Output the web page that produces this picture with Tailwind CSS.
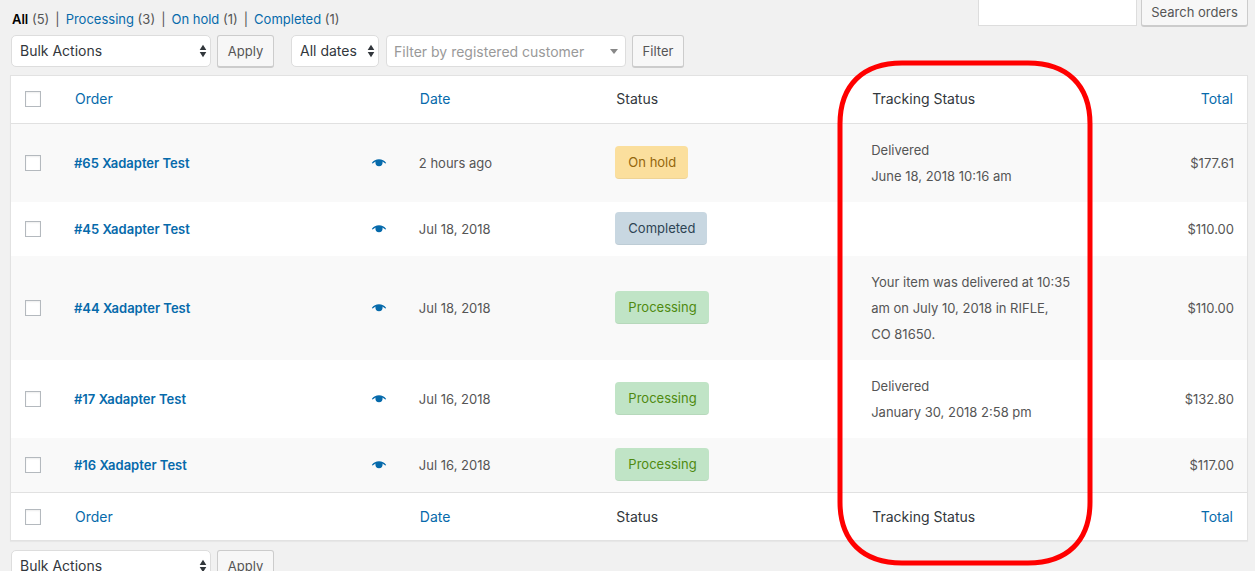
<!DOCTYPE html>
<html lang="en">
<head>
<meta charset="utf-8">
<title>Orders</title>
<script src="https://cdn.jsdelivr.net/npm/@tailwindcss/browser@4"></script>
</head>
<body class="h-screen overflow-hidden bg-[#f1f1f1] pl-2.5 pr-[7px] font-['Inter','Liberation_Sans',sans-serif] text-[13px] leading-5 text-[#555]">
<svg class="hidden">
  <symbol id="eye" viewBox="0 0 16 10"><path d="M.8 4.9C2.600 2.500 5 1.300 8 1.300s5.400 1.200 7.200 3.600l-.9.700c-.9-1-1.800-1.700-2.900-2.200.1.400.200.800.200 1.200a3.600 3.600 0 0 1-7.200 0c0-.4.100-.8.200-1.200-1.100.5-2 1.200-2.900 2.200z" fill="currentColor"/></symbol>
  <symbol id="updown" viewBox="0 0 8 14"><path d="M4 .8 7.300 5.900H.7zM4 13.200 7.300 8.100H.7z" fill="#32373c"/></symbol>
</svg>

<header class="flex h-[35px] items-start justify-between">
  <nav class="flex gap-1.5 pl-0.5 pt-[9px]" aria-label="Order status">
    <span><a href="#" class="font-semibold text-black">All</a> (5)</span><span>|</span>
    <span><a href="#" class="text-[#066aab]">Processing</a> (3)</span><span>|</span>
    <span><a href="#" class="text-[#066aab]">On hold</a> (1)</span><span>|</span>
    <span><a href="#" class="text-[#066aab]">Completed</a> (1)</span>
  </nav>
  <form class="flex gap-1">
    <input type="text" aria-label="Search orders" class="h-[26px] w-[159px] border border-t-0 border-[#ddd] bg-white px-1.5">
    <button type="button" class="h-[27px] w-[107px] whitespace-nowrap rounded-b-[3px] border border-b-2 border-t-0 border-[#ccc] bg-[#f7f7f7] pb-0.5">Search orders</button>
  </form>
</header>

<div class="flex h-[33px] items-start">
  <div class="relative ml-px w-[200px]">
    <select aria-label="Bulk action" class="h-8 w-full appearance-none rounded-[5px] border border-[#ddd] bg-white pl-2 pr-5 text-sm text-[#32373c]"><option>Bulk Actions</option></select>
    <svg class="pointer-events-none absolute right-1 top-[9px] h-3.5 w-2"><use href="#updown"/></svg>
  </div>
  <button type="button" class="ml-1.5 h-[33px] w-[57px] rounded-[3px] border border-b-2 border-[#ccc] bg-[#f7f7f7] pb-px">Apply</button>
  <div class="relative ml-[17px] w-[88px]">
    <select aria-label="Dates" class="h-8 w-full appearance-none rounded-[5px] border border-[#ddd] bg-white pl-2 pr-4 text-sm text-[#32373c]"><option>All dates</option></select>
    <svg class="pointer-events-none absolute right-1 top-[9px] h-3.5 w-2"><use href="#updown"/></svg>
  </div>
  <div class="relative ml-[7px] w-60">
    <select aria-label="Customer" class="h-8 w-full appearance-none rounded-[4px] border border-[#ddd] bg-white pl-[7px] pr-5 pt-0.5 text-sm text-[#999]"><option>Filter by registered customer</option></select>
    <svg class="pointer-events-none absolute right-2 top-3.5 h-[5px] w-2" viewBox="0 0 8 5"><path d="M0 0h8L4 5z" fill="#888"/></svg>
  </div>
  <button type="button" class="ml-1.5 h-[33px] w-[52px] rounded-[3px] border border-b-2 border-[#ccc] bg-[#f7f7f7] pb-px">Filter</button>
</div>

<main class="relative mt-[7px]">
  <div class="border border-[#e2e2e2] bg-white shadow-[0_1px_1px_rgba(0,0,0,0.04)]">
  <table class="w-full table-fixed border-collapse text-left">
    <colgroup><col class="w-[53px]"><col class="w-[27.9%]"><col class="w-[15.9%]"><col class="w-[20.7%]"><col class="w-[17.7%]"><col></colgroup>
    <thead class="text-sm text-[#32373c]">
      <tr class="h-[47px] border-b border-[#e1e1e1]">
        <td class="pl-3.5"><input type="checkbox" aria-label="Select all" class="block size-4 appearance-none border border-[#b4b9be] bg-white shadow-[inset_0_1px_2px_rgba(0,0,0,0.07)]"></td>
        <th class="px-[11px] font-normal"><a href="#" class="text-[#066aab]">Order</a></th>
        <th class="px-[11px] font-normal"><a href="#" class="text-[#066aab]">Date</a></th>
        <th class="px-[11px] font-normal">Status</th>
        <th class="px-[11px] font-normal">Tracking Status</th>
        <th class="px-3.5 text-right font-normal"><a href="#" class="text-[#066aab]">Total</a></th>
      </tr>
    </thead>
    <tbody>
      <tr class="h-[79px] bg-[#f9f9f9]">
        <td class="pl-3.5"><input type="checkbox" aria-label="Select order 65" class="block size-4 appearance-none border border-[#b4b9be] bg-white shadow-[inset_0_1px_2px_rgba(0,0,0,0.07)]"></td>
        <td class="pl-2.5 pr-[22px]"><div class="flex items-center justify-between text-[#066aab]"><a href="#" class="font-semibold">#65 Xadapter Test</a><button type="button" aria-label="Preview"><svg class="block h-2.5 w-4"><use href="#eye"/></svg></button></div></td>
        <td class="px-2.5">2 hours ago</td>
        <td class="px-2.5 pb-px"><mark class="flex w-fit h-[33px] items-center rounded-[4px] border-b border-black/5 bg-[#fbdf9d] pl-[13px] pr-3 text-[#94660c]">On hold</mark></td>
        <td class="px-2.5 leading-[26px]">Delivered<br>June 18, 2018 10:16 am</td>
        <td class="px-[13px] text-right">$177.61</td>
      </tr>
      <tr class="h-[54px]">
        <td class="pl-3.5"><input type="checkbox" aria-label="Select order 45" class="block size-4 appearance-none border border-[#b4b9be] bg-white shadow-[inset_0_1px_2px_rgba(0,0,0,0.07)]"></td>
        <td class="pl-2.5 pr-[22px]"><div class="flex items-center justify-between text-[#066aab]"><a href="#" class="font-semibold">#45 Xadapter Test</a><button type="button" aria-label="Preview"><svg class="block h-2.5 w-4"><use href="#eye"/></svg></button></div></td>
        <td class="px-2.5">Jul 18, 2018</td>
        <td class="px-2.5 pb-px"><mark class="flex w-fit h-[33px] items-center rounded-[4px] border-b border-black/5 bg-[#c8d7e1] pl-[13px] pr-3 text-[#2e4453]">Completed</mark></td>
        <td></td>
        <td class="px-[13px] text-right">$110.00</td>
      </tr>
      <tr class="h-[104px] bg-[#f9f9f9]">
        <td class="pl-3.5"><input type="checkbox" aria-label="Select order 44" class="block size-4 appearance-none border border-[#b4b9be] bg-white shadow-[inset_0_1px_2px_rgba(0,0,0,0.07)]"></td>
        <td class="pl-2.5 pr-[22px]"><div class="flex items-center justify-between text-[#066aab]"><a href="#" class="font-semibold">#44 Xadapter Test</a><button type="button" aria-label="Preview"><svg class="block h-2.5 w-4"><use href="#eye"/></svg></button></div></td>
        <td class="px-2.5">Jul 18, 2018</td>
        <td class="px-2.5 pb-px"><mark class="flex w-fit h-[33px] items-center rounded-[4px] border-b border-black/5 bg-[#c0e4c6] pl-[13px] pr-3 text-[#4f8a10]">Processing</mark></td>
        <td class="pl-2.5 pr-2 leading-[26px]">Your item was delivered at 10:35 am on July 10, 2018 in RIFLE, CO&nbsp;81650.</td>
        <td class="px-[13px] text-right">$110.00</td>
      </tr>
      <tr class="h-[78px]">
        <td class="pl-3.5"><input type="checkbox" aria-label="Select order 17" class="block size-4 appearance-none border border-[#b4b9be] bg-white shadow-[inset_0_1px_2px_rgba(0,0,0,0.07)]"></td>
        <td class="pl-2.5 pr-[22px]"><div class="flex items-center justify-between text-[#066aab]"><a href="#" class="font-semibold">#17 Xadapter Test</a><button type="button" aria-label="Preview"><svg class="block h-2.5 w-4"><use href="#eye"/></svg></button></div></td>
        <td class="px-2.5">Jul 16, 2018</td>
        <td class="px-2.5 pb-px"><mark class="flex w-fit h-[33px] items-center rounded-[4px] border-b border-black/5 bg-[#c0e4c6] pl-[13px] pr-3 text-[#4f8a10]">Processing</mark></td>
        <td class="px-2.5 leading-[26px]">Delivered<br>January 30, 2018 2:58 pm</td>
        <td class="px-[13px] text-right">$132.80</td>
      </tr>
      <tr class="h-[54px] bg-[#f9f9f9]">
        <td class="pl-3.5"><input type="checkbox" aria-label="Select order 16" class="block size-4 appearance-none border border-[#b4b9be] bg-white shadow-[inset_0_1px_2px_rgba(0,0,0,0.07)]"></td>
        <td class="pl-2.5 pr-[22px]"><div class="flex items-center justify-between text-[#066aab]"><a href="#" class="font-semibold">#16 Xadapter Test</a><button type="button" aria-label="Preview"><svg class="block h-2.5 w-4"><use href="#eye"/></svg></button></div></td>
        <td class="px-2.5">Jul 16, 2018</td>
        <td class="px-2.5 pb-px"><mark class="flex w-fit h-[33px] items-center rounded-[4px] border-b border-black/5 bg-[#c0e4c6] pl-[13px] pr-3 text-[#4f8a10]">Processing</mark></td>
        <td></td>
        <td class="px-[13px] text-right">$117.00</td>
      </tr>
    </tbody>
    <tfoot class="text-sm text-[#32373c]">
      <tr class="h-12 border-t border-[#e1e1e1]">
        <td class="pl-3.5 pt-px"><input type="checkbox" aria-label="Select all" class="block size-4 appearance-none border border-[#b4b9be] bg-white shadow-[inset_0_1px_2px_rgba(0,0,0,0.07)]"></td>
        <th class="px-[11px] pt-px font-normal"><a href="#" class="text-[#066aab]">Order</a></th>
        <th class="px-[11px] pt-px font-normal"><a href="#" class="text-[#066aab]">Date</a></th>
        <th class="px-[11px] pt-px font-normal">Status</th>
        <th class="px-[11px] pt-px font-normal">Tracking Status</th>
        <th class="px-3.5 pt-px text-right font-normal"><a href="#" class="text-[#066aab]">Total</a></th>
      </tr>
    </tfoot>
  </table>
  </div>
  <!-- Highlight ring around the tracking column -->
  <svg class="pointer-events-none absolute -top-[15px] left-[66.8%] h-[506px] w-[256px]" viewBox="0 0 256 506" fill="none" stroke="#f00" stroke-width="5"><path d="M65 3H191C230 3 253 25 253 64V442C253 481 230 503 191 503H65C26 503 3 481 3 442V64C3 25 26 3 65 3Z"/></svg>
</main>

<div class="mt-[9px] flex items-start">
  <div class="relative ml-px w-[200px]">
    <select aria-label="Bulk action" class="h-8 w-full appearance-none rounded-[5px] border border-[#ddd] bg-white pl-2 pr-5 text-sm text-[#32373c]"><option>Bulk Actions</option></select>
    <svg class="pointer-events-none absolute right-1 top-[9px] h-3.5 w-2"><use href="#updown"/></svg>
  </div>
  <button type="button" class="ml-1.5 h-[33px] w-[57px] rounded-[3px] border border-b-2 border-[#ccc] bg-[#f7f7f7] pb-px">Apply</button>
</div>
</body>
</html>
